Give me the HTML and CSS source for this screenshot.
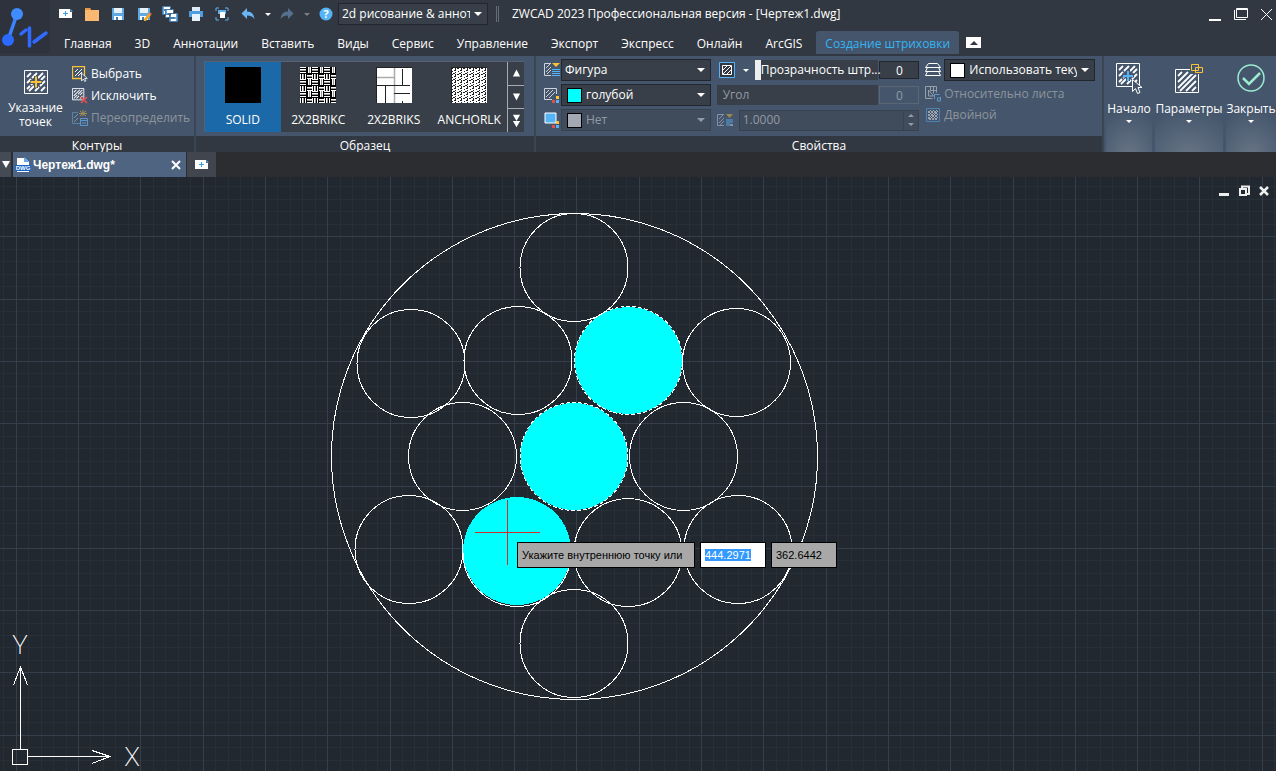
FILE: index.html
```html
<!doctype html>
<html lang="ru">
<head>
    <meta charset="UTF-8">
    <meta name="viewport" content="width=device-width, initial-scale=1.0">
    <title>ZWCAD 2023</title>
    <link rel="stylesheet" href="styles.css">
</head>
<body>
<svg class="defs" aria-hidden="true">
    <symbol id="i-hatch" viewBox="0 0 16 16">
        <path d="M.5.5h13v13H.5z" fill="none" stroke="currentColor"/>
        <path d="M2 5l3-3M2 9l7-7M2 12l4-4M7 7l5-5M5 12l3-3M9 8l3-3M9 12l3-3" stroke="currentColor" stroke-width="1.2"/>
    </symbol>
    <symbol id="i-bighatch" viewBox="0 0 24 24">
        <path d="M.5.5h23v23H.5z" fill="none" stroke="#fff"/>
        <path d="M3 7l4-4M3 13l4-4M8 8l5-5M14 8l5-5M3 19l3-3M7 15l2-2M5 21l5-5M11 21l4-4M16 16l5-5M17 21l4-4M17 10l4-4" stroke="#fff" stroke-width="1.8"/>
    </symbol>
    <symbol id="i-newtab" viewBox="0 0 16 16">
        <path d="M1 3h11v3h2v6H1z" fill="#fff"/>
        <path d="M12.500 3v2.500H15z" fill="#61b0ea"/>
        <path d="M5 7.500h5M7.500 5v5" stroke="#3d9be0"/>
    </symbol>
    <symbol id="i-save" viewBox="0 0 16 16">
        <path d="M2 2h12v12H2z" fill="#5fa8e6"/>
        <path d="M4 2h8v5H4z" fill="#e8f2fb"/>
        <path d="M4 10h8v4H4z" fill="#fff"/>
        <path d="M6 11h2v3H6z" fill="#3f7fb8"/>
    </symbol>
</svg>

<header class="top">
    <svg class="logo" viewBox="0 0 50 53">
        <path d="M17 14L8 40" stroke="#3a84ff" stroke-width="3.500"/>
        <circle cx="17" cy="14" r="6" fill="#3f8cff"/>
        <circle cx="8" cy="40" r="6" fill="#2c69ff"/>
        <path d="M21 34l5-4M29.500 28v18M34 42l12-9" fill="none" stroke="#2f6bff" stroke-width="3.500" stroke-linecap="round"/>
    </svg>
    <div class="top-rows">
        <div class="titlebar">
            <div class="quick">
                <button aria-label="Создать"><svg viewBox="0 0 16 16"><use href="#i-newtab"/></svg></button>
                <button aria-label="Открыть"><svg viewBox="0 0 16 16"><path d="M1 2h5l1 2h8v11H1z" fill="#fbb870"/><path d="M1 2h5l1 2H1z" fill="#e69a45"/></svg></button>
                <button aria-label="Сохранить"><svg viewBox="0 0 16 16"><use href="#i-save"/></svg></button>
                <button aria-label="Сохранить как"><svg viewBox="0 0 16 16"><use href="#i-save"/><path d="M8 13l5-6 2 2-5 6-2 0z" fill="#f5a623"/><path d="M13 7l1-1 2 2-1 1z" fill="#e25a50"/></svg></button>
                <button aria-label="Сохранить все"><svg viewBox="0 0 16 16"><path d="M0 0h9v9H0zM3 3h9v9H3zM7 7h9v9H7z" fill="#5fa8e6" stroke="#323841" stroke-width=".7"/><path d="M2 1h6v2H2zM5 4h6v3H5zM9 8h5v3H9zM9 13h5v2H9zM2 5h1v3H2zM4 9h3v2H4z" fill="#fff"/></svg></button>
                <button aria-label="Печать"><svg viewBox="0 0 16 16"><path d="M4 1h8v4H4z" fill="#dceaf8"/><path d="M1 5h14v6H1z" fill="#4e9de0"/><path d="M4 8h8v7H4z" fill="#e8f2fb"/></svg></button>
                <button aria-label="Просмотр"><svg viewBox="0 0 16 16"><path d="M2 5V2h3M11 2h3v3M14 11v3h-3M5 14H2v-3" fill="none" stroke="#61b0ea"/><path d="M4 4h8v4H4z" fill="#61b0ea"/><path d="M6 6h5v6H6z" fill="#fff"/></svg></button>
                <button aria-label="Отменить"><svg viewBox="0 0 16 16"><path d="M7 2v3.500c5 0 7 3 7.500 8C13 10.500 11 9.500 7 9.500V13L1.500 7.500z" fill="#6bb5f5"/></svg></button>
                <button class="caret" aria-label="Список отмены"></button>
                <button class="off" aria-label="Повторить"><svg viewBox="0 0 16 16"><path d="M9 2v3.500c-5 0-7 3-7.500 8C3 10.500 5 9.500 9 9.500V13l5.500-5.500z" fill="#55718f"/></svg></button>
                <button class="caret off" aria-label="Список повтора"></button>
                <button aria-label="Справка"><svg viewBox="0 0 16 16"><circle cx="8" cy="8" r="6.500" fill="#55b3f8"/><text x="8" y="12" class="q">?</text></svg></button>
            </div>
            <div class="combo workspace">
                <select aria-label="Рабочее пространство"><option>2d рисование &amp; аннот</option></select>
            </div>
            <i class="grip"></i>
            <h1>ZWCAD 2023 Профессиональная версия - [Чертеж1.dwg]</h1>
            <div class="win">
                <button aria-label="Свернуть"><svg viewBox="0 0 14 14"><path d="M1 13h12" stroke="#fff" stroke-width="2"/></svg></button>
                <button aria-label="Развернуть"><svg viewBox="0 0 14 14"><path d="M2.500 1.500h11v9h-11z M2 2.500h12M.5 3v9.500H12" fill="none" stroke="#fff"/></svg></button>
                <button aria-label="Закрыть окно"><svg viewBox="0 0 14 14"><path d="M1 2l11 11M12 2L1 13" stroke="#fff"/></svg></button>
            </div>
        </div>
        <nav class="menu">
            <a href="#">Главная</a>
            <a href="#">3D</a>
            <a href="#">Аннотации</a>
            <a href="#">Вставить</a>
            <a href="#">Виды</a>
            <a href="#">Сервис</a>
            <a href="#">Управление</a>
            <a href="#">Экспорт</a>
            <a href="#">Экспресс</a>
            <a href="#">Онлайн</a>
            <a href="#">ArcGIS</a>
            <a href="#" class="active">Создание штриховки</a>
            <button class="fold" aria-label="Свернуть ленту"></button>
        </nav>
    </div>
</header>

<main class="ribbon">
    <section class="panel bounds">
        <div class="panel-body">
            <button class="big">
                <svg viewBox="0 0 24 24"><use href="#i-bighatch"/><path d="M12 6v12M6 12h12" stroke="#45556b" stroke-width="4"/><path d="M12 6.500v11M6.500 12h11" stroke="#fcc235" stroke-width="2"/></svg>
                Указание точек
            </button>
            <div class="stack">
                <button><svg viewBox="0 0 16 16"><path d="M.5.5h12v12H.5z" fill="none" stroke="#fcc235" stroke-width="1.300"/><path d="M3 6l3-3M3 10l7-7M6 10l4-4" stroke="#fff"/><path d="M9.500 7v8l2-2 1.200 2.500 1.200-.6-1.200-2.400h2.600z" fill="#45556b" stroke="#fff" stroke-width=".8"/></svg>Выбрать</button>
                <button><svg viewBox="0 0 16 16"><use href="#i-hatch" width="14" height="14"/><path d="M9 9l6 6M15 9l-6 6" stroke="#e2504e" stroke-width="1.700"/></svg>Исключить</button>
                <button disabled><svg viewBox="0 0 16 16"><path d="M6 2.500H.5v11H8" fill="none" stroke="#5b83a8"/><path d="M2 8l4-4M2 12l4-4" stroke="#8592a1"/><path d="M8 1l6 5M14 1L8 6M11 0v6M7 3.500h8" stroke="#a18f55"/><path d="M8.500 8.500h7v7h-7zM9 10.500h6M10 13h4" fill="none" stroke="#5f96c7"/></svg>Переопределить</button>
            </div>
        </div>
        <h2>Контуры</h2>
    </section>

    <section class="panel sample">
        <div class="panel-body">
            <div class="gallery">
                <button class="tile picked"><svg viewBox="0 0 36 36"><path d="M0 0h36v36H0z"/></svg>SOLID</button>
                <button class="tile"><svg viewBox="0 0 36 36">
                    <defs><pattern id="brikc" width="12" height="12" patternUnits="userSpaceOnUse">
                        <path d="M0 3.500h6M9.500 0v6M3.500 6v6M6 9.500h6" stroke="#999" fill="none"/>
                        <path d="M0 1.500h6M0 4.500h6M7.500 0v6M11.500 0v6M1.500 6v6M4.500 6v6M6 7.500h6M6 10.500h6M6.500 0v12M0 6.500h12" stroke="#000" fill="none"/>
                    </pattern></defs>
                    <path d="M0 0h36v36H0z" fill="#fff"/><path d="M0 0h36v36H0z" fill="url(#brikc)"/></svg>2X2BRIKC</button>
                <button class="tile"><svg viewBox="0 0 36 36"><path d="M0 0h36v36H0z" fill="#fff"/><path d="M0 10.500h18M18.500 1v35" stroke="#aaa" stroke-width="1.500"/><path d="M0 18.500h34M26.500 2v16M9.500 19v17M18 26.500h16M26.500 34v2M.5 0v36M0 .5h36" stroke="#222"/></svg>2X2BRIKS</button>
                <button class="tile"><svg viewBox="0 0 36 36">
                    <defs><pattern id="anchor" width="6" height="6" patternUnits="userSpaceOnUse">
                        <path d="M0 1.500h2M2 .5h2M4.500 1v2M3 3.500h2M1.500 4v1M4 5.500h1" stroke="#222" fill="none"/>
                    </pattern></defs>
                    <path d="M0 0h36v36H0z" fill="#fff"/><path d="M0 0h36v36H0z" fill="url(#anchor)"/><path d="M.5 0v36M0 .5h36" stroke="#222"/></svg>ANCHORLK</button>
                <div class="scroll">
                    <button aria-label="Вверх"><svg viewBox="0 0 10 10"><path d="M1 9h8L5 1z"/></svg></button>
                    <button aria-label="Вниз"><svg viewBox="0 0 10 10"><path d="M1 1h8L5 9z"/></svg></button>
                    <button aria-label="Все образцы"><svg viewBox="0 0 10 14"><path d="M1 0h8L5 7zM1 7h8l-4 7z"/></svg></button>
                </div>
            </div>
        </div>
        <h2>Образец</h2>
    </section>

    <section class="panel props">
        <div class="panel-body">
            <div class="col lists">
                <div class="row">
                    <svg viewBox="0 0 16 16"><path d="M7 1.500H.5v12H7" fill="none" stroke="#ccd3dc"/><path d="M2 6l4-4M2 10l5-5M3 12l4-4" stroke="#ccd3dc"/><path d="M8 1h8l-4 4z" fill="#fcc235"/><path d="M8 7.500h8M8 9.500h8M8 11.500h8M8 13.500h8" stroke="#55b3f8"/></svg>
                    <div class="combo"><select aria-label="Тип"><option>Фигура</option></select></div>
                </div>
                <div class="row">
                    <svg viewBox="0 0 16 16"><path d="M12.500 7V1.500H.5v11H8" fill="none" stroke="#ccd3dc"/><path d="M2 6l3-3M2 10l7-7M5 11l6-6" stroke="#ccd3dc"/><path d="M12 9h3v3h-3z" fill="#fcc235"/><path d="M8 13h3v3H8z" fill="#e2504e"/><path d="M12 13h3v3h-3z" fill="#55b3f8"/></svg>
                    <div class="combo"><i class="swatch cyan"></i><select aria-label="Цвет"><option>голубой</option></select></div>
                </div>
                <div class="row">
                    <svg viewBox="0 0 16 16"><path d="M1 1h11v10H1z" fill="#55b3f8" stroke="#fff"/><path d="M12 9h3v3h-3z" fill="#fcc235"/><path d="M8 13h3v3H8z" fill="#e2504e"/><path d="M12 13h3v3h-3z" fill="#55b3f8"/></svg>
                    <div class="combo dim"><i class="swatch grey"></i><select aria-label="Фон" disabled><option>Нет</option></select></div>
                </div>
            </div>

            <div class="col values">
                <div class="row">
                    <button class="clear" aria-label="Прозрачность"><svg viewBox="0 0 16 16"><path d="M.5.5h15v15H.5z" fill="#323841" stroke="#55b3f8"/><path d="M3.500 3.500h9v9h-9zM4 8l4-4M4 12l8-8M8 12l4-4" fill="none" stroke="#fff"/></svg></button>
                    <button class="caret" aria-label="Режим прозрачности"></button>
                    <div class="slider">
                        <input type="range" id="alpha" min="0" max="90" value="0">
                        <label for="alpha">Прозрачность штр...</label>
                    </div>
                    <input type="text" class="num" value="0" aria-label="Значение прозрачности">
                </div>
                <div class="row dim">
                    <div class="slider">
                        <input type="range" id="angle" min="0" max="359" value="0" disabled>
                        <label for="angle">Угол</label>
                    </div>
                    <input type="text" class="num" value="0" aria-label="Значение угла" disabled>
                </div>
                <div class="row dim">
                    <svg viewBox="0 0 16 16"><path d="M7 2.500H.5v11H7" fill="none" stroke="#8592a1"/><path d="M2 7l4-4M2 11l5-5M3 13l4-4" stroke="#8592a1"/><path d="M9 2h7l-3.500 4z" fill="#9b8a4e"/><path d="M9 7h7v4h-3v3H9z" fill="#4c7ba5"/><path d="M13 12h3v2h-3z" fill="#8592a1"/></svg>
                    <div class="spin">
                        <input type="text" value="1.0000" aria-label="Масштаб" disabled>
                        <div><button class="up" aria-label="Больше" disabled></button><button class="down" aria-label="Меньше" disabled></button></div>
                    </div>
                </div>
            </div>

            <div class="col layer">
                <div class="row">
                    <svg viewBox="0 0 16 16"><path d="M3.500 1.500h9l3 4H.5zM2.500 5.500l-2 4h15l-2-4M2.500 9.500l-2 4h15l-2-4" fill="none" stroke="#fff"/></svg>
                    <div class="combo"><i class="swatch white"></i><select aria-label="Слой"><option>Использовать теку</option></select></div>
                </div>
                <button disabled><svg viewBox="0 0 16 16"><path d="M.5.500h11v6M.5.500v12h7M3.500 4v6h5zM5.500.500v4h6M8.500.500v7" fill="none" stroke="#96a0ad"/><path d="M9.500 13V8.500h5M15.500 11v4h-3v-3h3" fill="none" stroke="#5f96c7"/></svg>Относительно листа</button>
                <button disabled><svg viewBox="0 0 16 16"><path d="M1.500 1.500h13v13h-13z" fill="none" stroke="#4d83b3"/><path d="M3 6l3-3M3 9l6-6M3 12l9-9M4 13l9-9M7 13l6-6M10 13l3-3M3 10l3 3M3 7l6 6M3 4l9 9M5 3l8 8M8 3l5 5M11 3l2 2" stroke="#b0b8c2" stroke-width=".8"/></svg>Двойной</button>
            </div>
        </div>
        <h2>Свойства</h2>
    </section>

    <div class="folded">
        <button class="drop">
            <svg viewBox="0 0 28 32"><use href="#i-bighatch" x="1" y="1" width="24" height="24"/><path d="M13 8v11M7 13.500h12" stroke="#45556b" stroke-width="4"/><path d="M13 9v10M8 14h10" stroke="#55b3f8" stroke-width="2"/><path d="M17.500 17.500v12l3-3 2 5 2.500-1-2-5h4z" fill="#45556b" stroke="#fff"/></svg>
            Начало
        </button>
        <button class="drop">
            <svg viewBox="0 0 28 32"><path d="M.5 7.500h23v23H.5z" fill="none" stroke="#fff"/><path d="M3 14l4-4M3 20l10-10M3 26l16-16M5 29l16-16M11 29l10-10M17 29l4-4" stroke="#fff" stroke-width="1.800"/><path d="M15 1h14v11H15z" fill="#45566c"/><path d="M16.500 2.500h7v6h-7zM20.500 5.500h7v5h-7z" fill="none" stroke="#fcc235"/></svg>
            Параметры
        </button>
        <button class="drop">
            <svg viewBox="0 0 28 32"><circle cx="14" cy="16" r="13" fill="none" stroke="#9bebd1" stroke-width="1.500"/><path d="M6 16l6 6 11-11" fill="none" stroke="#9bebd1" stroke-width="2.500"/></svg>
            Закрыть
        </button>
    </div>
</main>

<div class="docs">
    <button class="list" aria-label="Список чертежей"></button>
    <div class="doc">
        <svg viewBox="0 0 16 16"><path d="M2 1h8l4 4v10H2z" fill="#fff"/><path d="M9 0l5 5H9z" fill="#61a8ec"/><path d="M0 8h16v6H0z" fill="#1464c8"/><text x="8" y="13" class="dwg">DWG</text></svg>
        <a href="#">Чертеж1.dwg*</a>
        <button aria-label="Закрыть чертеж"><svg viewBox="0 0 10 10"><path d="M1 1l8 8M9 1L1 9" stroke="#fff" stroke-width="2"/></svg></button>
    </div>
    <button class="new" aria-label="Новый чертеж"><svg viewBox="0 0 16 16"><use href="#i-newtab"/></svg></button>
</div>

<div class="canvas">
    <svg class="drawing">
        <g id="grid"></g>
        <g class="fills">
            <circle cx="628.500" cy="183.500" r="53.500"/>
            <circle cx="574" cy="279.500" r="53.500"/>
            <circle cx="517" cy="374" r="54"/>
        </g>
        <g class="outlines">
            <circle cx="574.500" cy="279.500" r="243"/>
            <circle cx="574" cy="90.500" r="54"/>
            <circle cx="411" cy="186.500" r="54"/>
            <circle cx="518" cy="183.500" r="54"/>
            <circle cx="628.500" cy="183.500" r="54" class="dash"/>
            <circle cx="736.500" cy="185.500" r="54"/>
            <circle cx="462.500" cy="279.500" r="54"/>
            <circle cx="574" cy="279.500" r="54" class="dash"/>
            <circle cx="683.500" cy="279.500" r="54"/>
            <circle cx="409" cy="372.500" r="54"/>
            <path d="M463 375.500a54 54 0 0 0 108 0"/>
            <circle cx="628" cy="375.500" r="54"/>
            <circle cx="738" cy="372.500" r="54"/>
            <circle cx="574" cy="466.500" r="54"/>
        </g>
        <path class="cursor" d="M475 355.500h65M507.500 323v65"/>
    </svg>

    <svg class="ucs" viewBox="0 0 150 140">
        <path d="M12.500 118.500h15v15h-15zM20.500 118V36M13.500 54l7-18 7 18M28 125.500h82M92 119.500l18 6-18 7"/>
        <text x="20" y="23">Y</text>
        <text x="132" y="135">X</text>
    </svg>

    <div class="mdi">
        <button aria-label="Свернуть чертеж"><svg viewBox="0 0 12 12"><path d="M1 9.500h10" stroke="#eee" stroke-width="3"/></svg></button>
        <button aria-label="Восстановить чертеж"><svg viewBox="0 0 12 12"><path d="M4 3V1.500h7V9H9M2 4h6v6H2z" fill="none" stroke="#eee" stroke-width="2"/></svg></button>
        <button aria-label="Закрыть вид"><svg viewBox="0 0 12 12"><path d="M2 2l8 8M10 2l-8 8" stroke="#eee" stroke-width="2.500"/></svg></button>
    </div>

    <form class="prompt">
        <label for="px">Укажите внутреннюю точку или</label>
        <input type="text" id="px" value="444.2971">
        <input type="text" id="py" value="362.6442" aria-label="Y">
    </form>
</div>

<script src="script.js"></script>
</body>
</html>
```

FILE: styles.css
```css
* {
    box-sizing: border-box;
}
body {
    margin: 0;
    height: 100vh;
    display: flex;
    flex-direction: column;
    overflow: hidden;
    background: #222830;
    color: #ffffff;
    font-family: "Open Sans", "Noto Sans", sans-serif;
    font-size: 12px;
    line-height: 14px;
}
button, input, select {
    font: inherit;
    color: inherit;
    margin: 0;
    padding: 0;
    border: 0;
    background: none;
    border-radius: 0;
}
button {
    display: flex;
    align-items: center;
    justify-content: center;
}
a {
    color: inherit;
    text-decoration: none;
}
h1, h2 {
    margin: 0;
    font-size: 12px;
    font-weight: 400;
}
svg {
    display: block;
    flex: none;
    width: 16px;
    height: 16px;
}
.defs {
    position: absolute;
    width: 0;
    height: 0;
}

/* title bar and tabs */
.top {
    display: flex;
    height: 56px;
    background: #323841;
}
.logo {
    width: 50px;
    height: 53px;
    background: #2d323d;
}
.top-rows {
    flex: 1;
    min-width: 0;
}
.titlebar {
    display: flex;
    align-items: center;
    height: 28px;
    padding-right: 2px;
}
.titlebar h1 {
    flex: 1;
    white-space: nowrap;
}
.quick {
    display: flex;
    gap: 10px;
    padding: 0 4px 0 8px;
}
.caret {
    width: 6px;
}
.caret::before {
    content: "";
    border: 3px solid transparent;
    border-top-color: #ffffff;
    border-bottom: 0;
}
.quick .caret {
    margin: 0 -2px 0 -1px;
}
.caret.off::before {
    border-top-color: #7b8087;
}
.q {
    font-size: 11px;
    font-weight: 700;
    fill: #ffffff;
    text-anchor: middle;
}
.combo {
    display: flex;
    align-items: center;
    position: relative;
    height: 22px;
    background: #383f48;
    border: 1px solid #22272f;
    flex: 1;
    min-width: 0;
}
.combo select {
    appearance: none;
    flex: 1;
    min-width: 0;
    height: 20px;
    padding-left: 3px;
    margin-right: 17px;
    opacity: 1;
}
.combo::after {
    content: "";
    position: absolute;
    right: 5px;
    top: 8px;
    border: 4px solid transparent;
    border-top-color: #ffffff;
    border-bottom: 0;
}
.workspace {
    flex: none;
    width: 150px;
}
.grip {
    width: 3px;
    height: 16px;
    margin: 0 13px 0 8px;
    border: 1px solid #666c75;
    border-width: 0 1px;
}
.win {
    display: flex;
    gap: 12px;
}
.win svg {
    width: 14px;
    height: 14px;
}
.menu {
    display: flex;
    align-items: center;
    gap: 5px;
    padding: 3px 0 0 5px;
    white-space: nowrap;
}
.menu a {
    padding: 6px 9px 3px;
    border-radius: 3px 3px 0 0;
}
.menu .active {
    background: #45566c;
    color: #35b4f4;
}
.fold {
    width: 15px;
    height: 11px;
    margin-left: 2px;
    background: #ffffff;
}
.fold::before {
    content: "";
    border: 4px solid transparent;
    border-bottom-color: #323841;
    border-top: 0;
}

/* ribbon */
.ribbon {
    display: flex;
    height: 96px;
    background: #323841;
}
.panel {
    display: flex;
    flex-direction: column;
    border-right: 2px solid #3a4554;
}
.panel-body {
    display: flex;
    height: 80px;
    background: #45566c;
}
.panel h2 {
    padding-top: 4px;
    height: 16px;
    line-height: 12px;
    text-align: center;
}
.bounds {
    width: 196px;
}
.big {
    flex-direction: column;
    justify-content: flex-start;
    gap: 7px;
    width: 71px;
    padding: 14px 5px 0;
}
.big svg {
    width: 24px;
    height: 24px;
}
.stack {
    display: flex;
    flex-direction: column;
    gap: 6px;
    padding: 10px 0 0 1px;
}
.stack button, .layer button {
    justify-content: flex-start;
    gap: 3px;
    height: 16px;
    white-space: nowrap;
}
.stack button:disabled, .layer button:disabled {
    color: #8d949c;
}
.sample {
    width: 340px;
}
.sample .panel-body {
    padding: 5px 10px 4px 8px;
}
.gallery {
    display: flex;
    flex: 1;
    background: #383f48;
    border: 1px solid #566273;
    border-width: 1px 0 0 1px;
}
.tile {
    flex: 1;
    flex-direction: column;
    justify-content: flex-start;
    gap: 10px;
    padding-top: 5px;
}
.tile svg {
    width: 36px;
    height: 36px;
}
.picked {
    background: #1c69a9;
}
.scroll {
    display: flex;
    flex-direction: column;
    width: 17px;
    border-left: 1px solid #a4abb5;
}
.scroll button {
    flex: 1;
    border-bottom: 1px solid #a4abb5;
}
.scroll button:last-child {
    border-bottom: 0;
}
.scroll svg {
    width: 9px;
    height: 10px;
    fill: #ffffff;
}
.scroll button:last-child svg {
    height: 14px;
}
.props {
    flex: 1;
}
.props .panel-body {
    gap: 6px;
    padding: 3px 7px 0 8px;
}
.col {
    display: flex;
    flex-direction: column;
    gap: 3px;
    min-width: 0;
}
.row {
    display: flex;
    align-items: center;
    gap: 1px;
    height: 22px;
}
.lists {
    flex: 167;
}
.values {
    flex: 203;
}
.layer {
    flex: 170;
}
.swatch {
    width: 15px;
    height: 15px;
    margin: 0 1px 0 5px;
    border: 1px solid #000000;
}
.cyan {
    background: #00ffff;
}
.white {
    background: #ffffff;
}
.grey {
    background: #a3a9b3;
}
.dim {
    color: #929aa5;
}
.combo.dim {
    background: #404c5c;
    border-color: #36424f;
}
.combo.dim::after {
    border-top-color: #929aa5;
}
.clear {
    width: 20px;
}
.values .caret {
    width: 16px;
}
.slider {
    flex: 1;
    position: relative;
    height: 20px;
    background: #383f48;
}
.slider input {
    appearance: none;
    display: block;
    width: 100%;
    height: 20px;
}
.slider input::-webkit-slider-thumb {
    appearance: none;
    width: 6px;
    height: 20px;
    background: #eeeeee;
}
.slider input:disabled::-webkit-slider-thumb {
    background: transparent;
}
.slider label {
    position: absolute;
    left: 6px;
    top: 3px;
    white-space: nowrap;
}
.num {
    width: 40px;
    height: 18px;
    text-align: center;
    background: #383f48;
    border: 1px solid #22272f;
}
.num:disabled {
    background: #45566c;
    border-color: #5a6675;
}
.spin {
    display: flex;
    flex: 1;
    height: 21px;
    margin-left: 5px;
    background: #404c5c;
    border: 1px solid #36424f;
}
.spin input {
    flex: 1;
    min-width: 0;
    padding-left: 3px;
}
.spin div {
    display: flex;
    flex-direction: column;
    width: 15px;
    border-left: 1px solid #36424f;
}
.spin button {
    flex: 1;
}
.up::before, .down::before {
    content: "";
    border: 3px solid transparent;
    border-bottom-color: #929aa5;
    border-top: 0;
}
.down::before {
    border: 3px solid transparent;
    border-top-color: #929aa5;
    border-bottom: 0;
}
.layer {
    gap: 5px;
}
.layer .row {
    gap: 3px;
}

.folded {
    display: grid;
    grid-template-columns: 46px 68px 50px;
    gap: 3px;
    padding-left: 2px;
    background: #45566c;
    white-space: nowrap;
}
.drop {
    flex-direction: column;
    justify-content: flex-start;
    gap: 8px;
    padding-top: 6px;
    background: radial-gradient(ellipse 80% 50% at 50% 105%, #687586 0%, #45566c 100%);
}
.drop svg {
    width: 28px;
    height: 32px;
}
.drop::after {
    content: "";
    margin-top: -4px;
    border: 3px solid transparent;
    border-top-color: #ffffff;
    border-bottom: 0;
}

/* drawing tabs */
.docs {
    display: flex;
    height: 25px;
    background: #2b2d31;
}
.list {
    width: 11px;
    background: #454b54;
}
.list::before {
    content: "";
    border: 4px solid transparent;
    border-top: 7px solid #ffffff;
    border-bottom: 0;
}
.doc {
    display: flex;
    align-items: center;
    gap: 2px;
    width: 173px;
    margin: 0 1px 0 2px;
    padding: 0 5px 0 2px;
    background: #4f6480;
    font-family: "Liberation Sans", Arial, sans-serif;
    font-weight: 700;
}
.doc a {
    flex: 1;
}
.doc button svg {
    width: 10px;
    height: 10px;
}
.dwg {
    font-size: 6px;
    fill: #ffffff;
    text-anchor: middle;
}
.new {
    width: 29px;
    background: #41464e;
}

/* model space */
.canvas {
    position: relative;
    flex: 1;
    min-height: 0;
    overflow: hidden;
}
.drawing {
    width: 100%;
    height: 100%;
    shape-rendering: crispEdges;
}
.minor {
    stroke: #282f37;
}
.major {
    stroke: #363e4b;
}
.fills {
    fill: #00ffff;
}
.outlines {
    fill: none;
    stroke: #ffffff;
}
.dash {
    stroke-dasharray: 4 2;
}
.cursor {
    stroke: #d22a2a;
}
.ucs {
    position: absolute;
    left: 0;
    bottom: 0;
    width: 150px;
    height: 140px;
    fill: none;
    stroke: #ffffff;
    shape-rendering: crispEdges;
}
.ucs text {
    font-family: Roboto, sans-serif;
    font-size: 26px;
    font-weight: 200;
    fill: #ffffff;
    stroke: none;
    text-anchor: middle;
}
.mdi {
    position: absolute;
    top: 8px;
    right: 6px;
    display: flex;
    gap: 8px;
}
.mdi svg {
    width: 12px;
    height: 12px;
}
.prompt {
    position: absolute;
    left: 517px;
    top: 365px;
    display: flex;
    gap: 5px;
    color: #000000;
    font-family: "Liberation Sans", Arial, sans-serif;
    font-size: 11px;
}
.prompt label, .prompt input {
    height: 26px;
    padding: 0 4px;
    border: 1px solid #000000;
    background: #a8a8a8;
    line-height: 24px;
}
.prompt label {
    min-width: 178px;
}
.prompt input {
    width: 66px;
    outline: none;
}
.prompt #px {
    background: #ffffff;
}
.prompt ::selection {
    background: #3399ff;
    color: #ffffff;
}
```

FILE: script.js
```js
// grid lines, every fifth one is major
const NS = "http://www.w3.org/2000/svg";
const grid = document.getElementById("grid");
const STEP = 12.46;
const START_X = 16.2;
const START_Y = 59.8;

function line(x1, y1, x2, y2, cls) {
    const el = document.createElementNS(NS, "line");
    el.setAttribute("x1", x1);
    el.setAttribute("y1", y1);
    el.setAttribute("x2", x2);
    el.setAttribute("y2", y2);
    el.setAttribute("class", cls);
    grid.appendChild(el);
}

function drawGrid() {
    const { width, height } = document.querySelector(".canvas").getBoundingClientRect();
    grid.innerHTML = "";
    for (const cls of ["minor", "major"]) {
        for (let i = -5; START_X + i * STEP < width; i++) {
            if ((i % 5 === 0) === (cls === "major")) {
                const x = Math.floor(START_X + i * STEP) + 0.5;
                line(x, 0, x, height, cls);
            }
        }
        for (let i = -5; START_Y + i * STEP < height; i++) {
            if ((i % 5 === 0) === (cls === "major")) {
                const y = Math.floor(START_Y + i * STEP) + 0.5;
                line(0, y, width, y, cls);
            }
        }
    }
}

drawGrid();
window.addEventListener("resize", drawGrid);

document.getElementById("px").focus();
document.getElementById("px").select();
```
